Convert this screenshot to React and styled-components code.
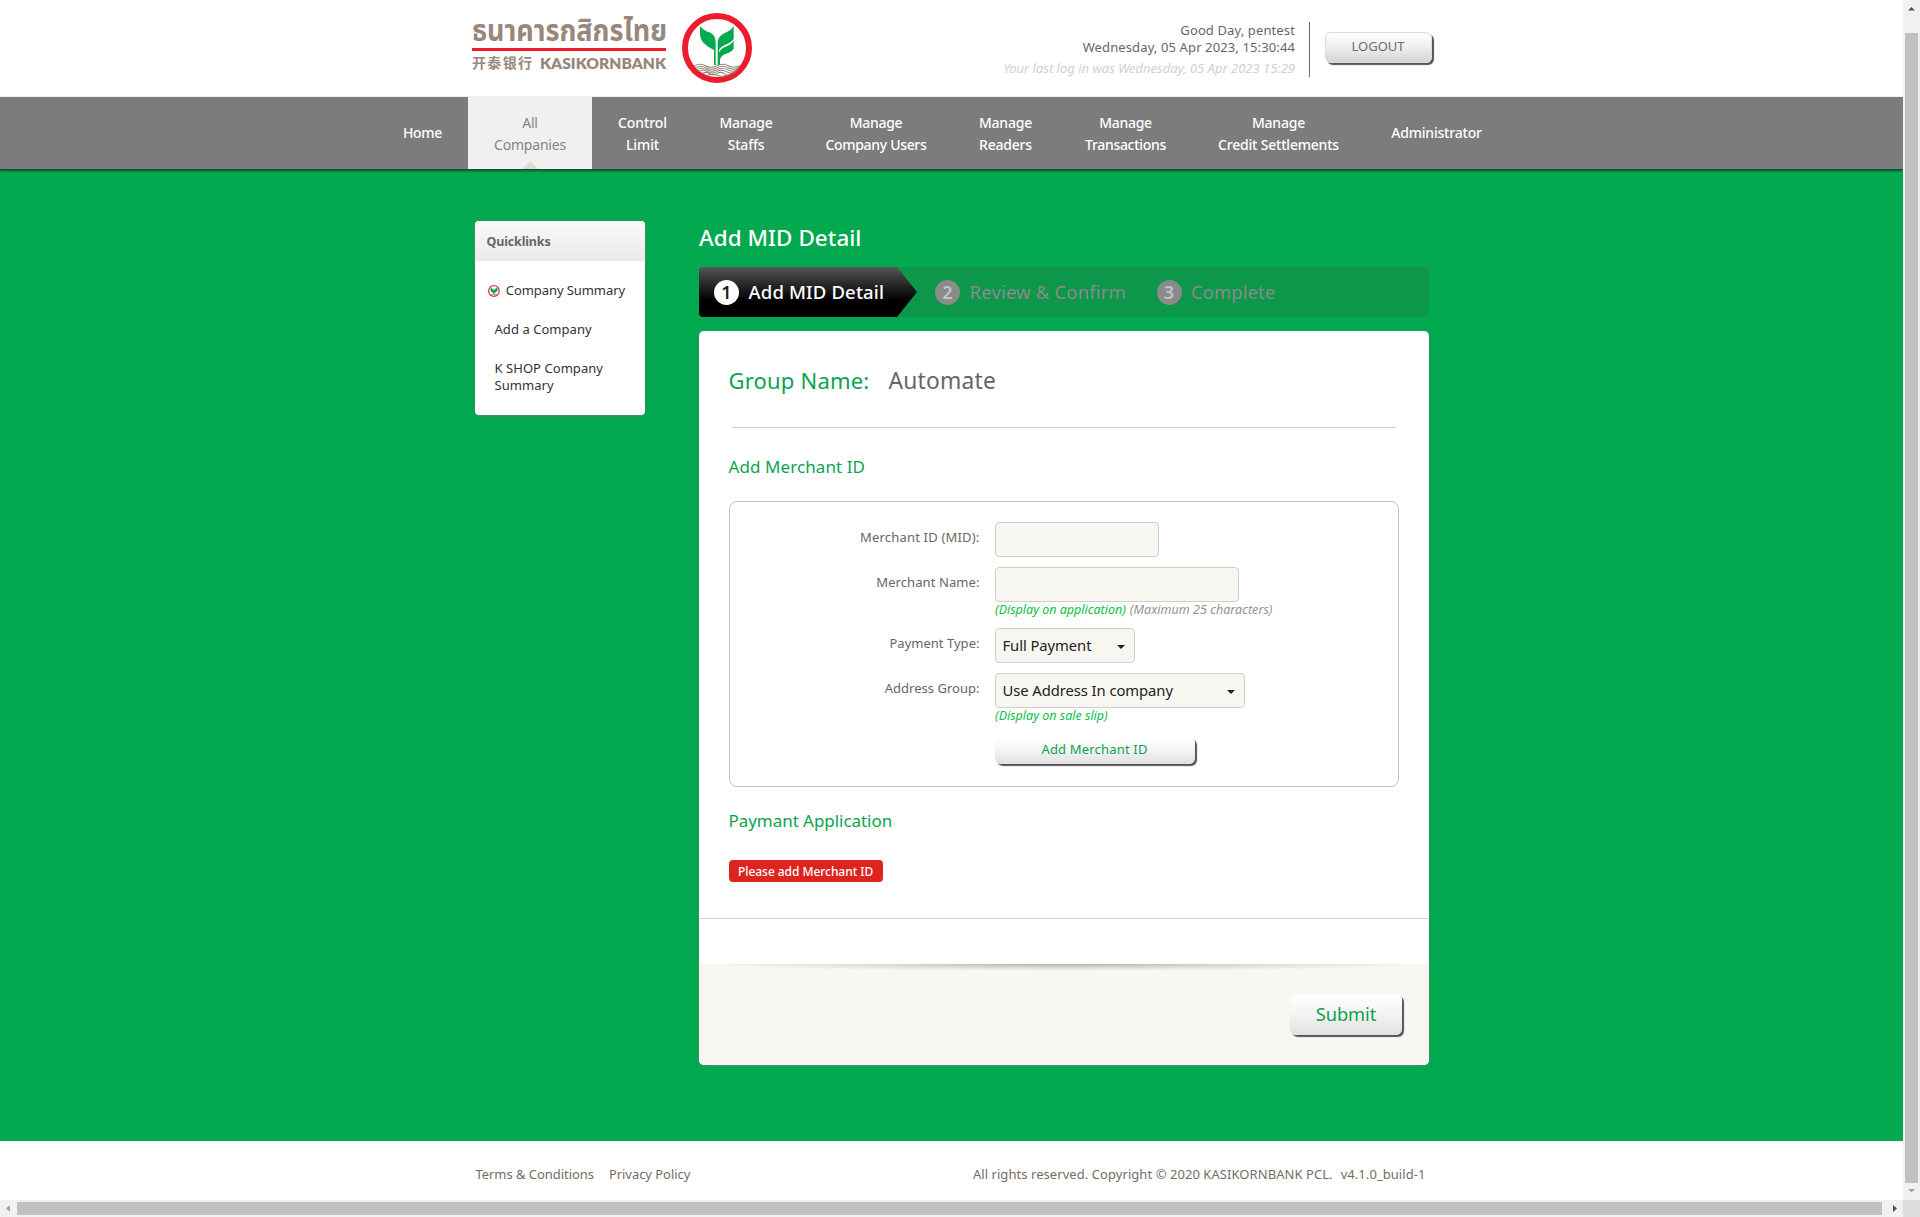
import React from "react";
import styled, { createGlobalStyle, css } from "styled-components";

const GlobalStyle = createGlobalStyle`
  *, *::before, *::after { box-sizing: border-box; }
  body {
    margin: 0;
    overflow: hidden;
    background: #fff;
    color: #666;
    font: 13px/17px "Noto Sans", "Open Sans", "Noto Sans CJK SC", sans-serif;
  }
`;

const Window = styled.div`
  display: grid;
  grid-template: 1200px 17px / 1903px 17px;
  width: 1920px;
  height: 1217px;
  overflow: hidden;
`;

const Page = styled.div`
  display: flex;
  flex-direction: column;
  overflow: hidden;
`;

/* ---------- header ---------- */

const Header = styled.header`
  display: flex;
  flex: none;
  height: 97px;
  padding: 0 470px 0 472px;
  border-bottom: 1px solid #efefef;
`;

const Logo = styled.svg`
  flex: none;
  width: 290px;
  height: 96px;
`;

const Session = styled.div`
  margin: 22px 0 0 auto;
  padding-right: 14px;
  height: 55px;
  border-right: 1px solid #776b66;
  text-align: right;
  letter-spacing: 0.12px;
  white-space: nowrap;
`;

const LastLogin = styled.div`
  margin-top: 4px;
  color: #d0d0d0;
  font-style: italic;
  letter-spacing: 0;
`;

const Button = styled.button`
  flex: none;
  padding: 0;
  border: 0;
  border-radius: 6px;
  background: linear-gradient(#fff, #f2f2f2 55%, #e0e0e0);
  box-shadow: 2px 2px 1px #555;
  color: #0aa34f;
  font: inherit;
`;

const LogoutButton = styled(Button)`
  width: 107px;
  height: 31px;
  margin: 32px 1px 0 15px;
  padding: 0 1px 3px 0;
  border: 1px solid #dcdcdc;
  background: linear-gradient(#fff, #f0f0f0 45%, #d4d4d4);
  color: #776b66;
`;

/* ---------- navigation ---------- */

const Nav = styled.nav`
  position: relative;
  display: flex;
  flex: none;
  height: 72px;
  padding-left: 377px;
  background: #7c7c7c;
  box-shadow: 0 1px 0 #1c4a31, 0 2px 2px rgba(0, 50, 20, 0.7);
`;

const NavItem = styled.a`
  position: relative;
  display: flex;
  align-items: center;
  justify-content: center;
  width: ${(p) => p.$width}px;
  padding-top: ${(p) => (p.$single ? 0 : 1)}px;
  color: #fff;
  font-size: 14px;
  font-weight: 500;
  line-height: 22px;
  letter-spacing: ${(p) => p.$tracking || -0.2}px;
  text-align: center;
  white-space: pre-line;
  ${(p) =>
    p.$active &&
    css`
      background: #f0f0f0;
      color: #858585;
      font-weight: 400;
      &::after {
        content: "";
        position: absolute;
        bottom: 0;
        left: 54px;
        border: 8px solid transparent;
        border-top: 0;
        border-bottom-color: #dfd9d9;
      }
    `}
`;

/* ---------- body ---------- */

const Body = styled.main`
  display: flex;
  flex: none;
  align-items: flex-start;
  gap: 54px;
  height: 972px;
  padding: 52px 0 0 475px;
  background: #02a94f;
`;

const Sidebar = styled.aside`
  width: 170px;
  height: 194px;
  border-radius: 4px;
  overflow: hidden;
  background: #fff;
  box-shadow: 0 1px 3px rgba(120, 130, 120, 0.7);
`;

const SidebarTitle = styled.h3`
  height: 40px;
  margin: 0;
  padding-left: 11.5px;
  background: linear-gradient(#f9f9f9, #eaeaea);
  color: #6b6663;
  font-size: 12.5px;
  line-height: 42px;
  letter-spacing: -0.15px;
`;

const Links = styled.ul`
  display: flex;
  flex-direction: column;
  gap: 22px;
  margin: 0;
  padding: 21px 20px 0 19.5px;
  list-style: none;
  color: #333;
`;

const LinkItem = styled.li`
  display: flex;
  align-items: center;
  gap: 6px;
  margin-left: ${(p) => (p.$current ? -6.5 : 0)}px;
  letter-spacing: ${(p) => (p.$current ? -0.08 : 0.05)}px;
  white-space: ${(p) => (p.$current ? "nowrap" : "normal")};
`;

const Content = styled.section`
  width: 730px;
`;

const PageTitle = styled.h1`
  height: 46px;
  margin: 0;
  padding-top: 1px;
  color: #fff;
  font-size: 22.4px;
  font-weight: 500;
  line-height: 32px;
  letter-spacing: 0.06px;
`;

const Stepper = styled.ol`
  display: flex;
  height: 50px;
  margin: 0 0 14px;
  padding: 0;
  border-radius: 4px;
  background: #0c974a;
  list-style: none;
`;

const Step = styled.li`
  display: flex;
  align-items: center;
  gap: 9.5px;
  height: 50px;
  color: #8b8b8b;
  font-size: 18.5px;
  line-height: 30px;
  letter-spacing: ${(p) => p.$tracking}px;
  white-space: nowrap;
  width: ${(p) => p.$width}px;
  padding-left: ${(p) => p.$inset}px;
  ${(p) =>
    p.$active &&
    css`
      border-radius: 4px 0 0 4px;
      background: linear-gradient(#555, #000 66%);
      clip-path: polygon(0 0, 198px 0, 218px 50%, 198px 100%, 0 100%);
      color: #fff;
      font-weight: 500;
    `}
`;

const StepNumber = styled.span`
  flex: none;
  width: 25px;
  height: 25px;
  border-radius: 50%;
  background: ${(p) => (p.$active ? "#fff" : "#8b8b8b")};
  color: ${(p) => (p.$active ? "#222" : "#c4c4c4")};
  font-size: 18px;
  font-weight: 600;
  line-height: 25px;
  text-align: center;
`;

const Card = styled.div`
  display: flex;
  flex-direction: column;
  height: 734px;
  border-radius: 5px;
  overflow: hidden;
  background: #fff;
  box-shadow: 0 1px 3px rgba(120, 130, 120, 0.7);
`;

const GroupName = styled.h2`
  display: flex;
  align-items: baseline;
  gap: 19px;
  margin: 34px 0 0 29.5px;
  height: 30px;
  color: #0aa34f;
  font-size: 22px;
  font-weight: 400;
  line-height: 30px;
  letter-spacing: 0.2px;
`;

const GroupValue = styled.span`
  color: #666;
  font-size: 22.8px;
`;

const Divider = styled.div`
  flex: none;
  height: 1px;
  margin: ${(p) => p.$margin};
  background: #d0cfca;
`;

const SectionTitle = styled.h3`
  margin: ${(p) => p.$top}px 0 0 29.5px;
  color: #0aa34f;
  font-size: 17px;
  font-weight: 400;
  line-height: 24px;
  letter-spacing: ${(p) => p.$tracking}px;
`;

const Form = styled.div`
  display: grid;
  grid-template: 45px 61px 45px 64px 1fr / 249.5px 1fr;
  column-gap: 15.5px;
  height: 286px;
  margin: 22px 30px 0;
  padding-top: 20px;
  border: 1px solid #c6c6c6;
  border-radius: 8px;
`;

const Label = styled.label`
  letter-spacing: ${(p) => p.$tracking || 0.02}px;
  line-height: 30px;
  text-align: right;
`;

const Input = styled.input`
  display: block;
  width: ${(p) => p.$width}px;
  height: 35px;
  border: 1px solid #d0cfca;
  border-radius: 4px;
  background: #f7f6f1;
`;

const Select = styled.div`
  display: flex;
  align-items: center;
  justify-content: space-between;
  width: ${(p) => p.$width}px;
  height: 35px;
  padding: 0 9px 0 6.5px;
  border: 1px solid #d0cfca;
  border-radius: 4px;
  background: #f7f6f1;
  color: #222;
  font-size: 14.8px;
  letter-spacing: -0.07px;
`;

const Caret = styled.span`
  margin-top: 2px;
  border: 4px solid transparent;
  border-top-color: #222;
  border-bottom: 0;
`;

const Hint = styled.div`
  display: flex;
  gap: 4px;
  color: #929292;
  font-size: 12.5px;
  font-style: italic;
  line-height: 15px;
  letter-spacing: 0.04px;
  white-space: nowrap;
`;

const HintGreen = styled.span`
  color: #0dc143;
  letter-spacing: 0;
`;

const AddButton = styled(Button)`
  grid-column: 2;
  width: 200px;
  height: 27px;
  padding: 0 1px 2px 0;
  letter-spacing: 0.18px;
`;

const Badge = styled.div`
  align-self: flex-start;
  height: 22px;
  margin: 27px 0 36px 30px;
  padding: 0 9.5px 0 9px;
  border-radius: 4px;
  background: #dd241f;
  color: #fff;
  font-size: 12px;
  font-weight: 500;
  line-height: 23px;
  letter-spacing: -0.05px;
`;

const CardFooter = styled.div`
  display: flex;
  justify-content: flex-end;
  height: 101px;
  margin-top: auto;
  padding: 30px 27px 0;
  background: radial-gradient(50% 7px at 50% 0, rgba(110, 110, 105, 0.5), rgba(160, 160, 155, 0.25) 60%, transparent) #f8f7f4;
`;

const SubmitButton = styled(Button)`
  width: 112px;
  height: 41px;
  padding: 0;
  font-size: 18.2px;
`;

/* ---------- footer ---------- */

const Footer = styled.footer`
  display: flex;
  gap: 15px;
  flex: none;
  height: 59px;
  padding: 25px 477.5px 0 475.5px;
  color: #776b66;
  letter-spacing: -0.05px;
`;

const Legal = styled.div`
  display: flex;
  gap: 8px;
  margin-left: auto;
  letter-spacing: 0.06px;
`;

/* ---------- scrollbars ---------- */

const Scrollbar = styled.div`
  display: flex;
  flex-direction: ${(p) => (p.$vertical ? "column" : "row")};
  align-items: center;
  background: #f1f1f1;
`;

const Arrow = styled.svg`
  flex: none;
  width: 17px;
  height: 17px;
  fill: ${(p) => (p.$enabled ? "#505050" : "#a3a3a3")};
`;

const Thumb = styled.div`
  flex: none;
  width: ${(p) => p.$width}px;
  height: ${(p) => p.$height}px;
  margin: ${(p) => p.$margin};
  background: #c1c1c1;
`;

const Corner = styled.div`
  background: #dcdcdc;
`;

const Emblem = () => (
  <g>
    <circle cx="771" cy="144" r="96" fill="#fff" stroke="#ed1b2e" strokeWidth="18" />
    <g fill="none" stroke="#98877c" strokeWidth="3.2">
      <path d="M703 197q17-9 34 0t34 0t34 0t34 0" />
      <path d="M706 203q16-9 32 0t33 0t33 0t33 0" />
      <path d="M709 209q16-9 31 0t31 0t31 0t31 0" />
      <path d="M715 215q14-9 28 0t28 0t28 0t28 0" />
      <path d="M727 221q11-8 22 0t22 0t22 0t22 0" />
      <path d="M743 226q14-6 28 0t28 0" />
    </g>
    <g fill="#02a94f">
      <path d="M720 77q8 13 28 20q18 8 19 27V195H762V150Q744 142 731 129Q720 118 720 100Z" />
      <path d="M821 77q-6 13-25 21q-22 9-23 30v67h4v-43q2-9 16-16q22-9 28-19Z" />
      <path d="M821 122v24q-6 10-25 16q-16 6-16 20v13h-4v-32q2-14 17-21q20-8 28-20Z" />
    </g>
  </g>
);

const BankLogo = () => (
  <Logo viewBox="0 0 290 96">
    <g fill="#98877c">
      <text
        x="0"
        y="0"
        transform="translate(0 40.5) scale(1 1.2)"
        fontSize="25.4"
        fontWeight="700"
        textLength="195"
        lengthAdjust="spacingAndGlyphs"
        fontFamily="Noto Sans Thai, Noto Sans, sans-serif"
      >
        ธนาคารกสิกรไทย
      </text>
      <text x="0" y="68" fontSize="14" fontWeight="600" textLength="60" fontFamily="Noto Sans CJK SC, sans-serif">
        开泰银行
      </text>
      <text x="68" y="68.5" fontSize="15.6" fontWeight="800" textLength="126" fontFamily="Lato, sans-serif">
        KASIKORNBANK
      </text>
    </g>
    <rect y="48" width="194" height="3" fill="#ed1b2e" />
    <g transform="scale(0.33333) translate(-36 0)">
      <Emblem />
    </g>
  </Logo>
);

const MiniEmblem = () => (
  <svg width="12" height="12" viewBox="666 39 210 210" preserveAspectRatio="none">
    <circle cx="771" cy="144" r="94" fill="#fff" stroke="#e8304a" strokeWidth="22" />
    <path fill="#02a94f" d="M712 78l60 50 62-50v66l-52 36v24h-22v-24l-48-30Z" />
    <path stroke="#98a89c" strokeWidth="16" d="M725 206h92" />
  </svg>
);

const NAV = [
  { text: "Home", width: 91, tracking: -0.3, single: true },
  { text: "All\nCompanies", width: 124, active: true },
  { text: "Control\nLimit", width: 101, tracking: -0.1 },
  { text: "Manage\nStaffs", width: 106 },
  { text: "Manage\nCompany Users", width: 154, tracking: -0.32 },
  { text: "Manage\nReaders", width: 105 },
  { text: "Manage\nTransactions", width: 135, tracking: -0.3 },
  { text: "Manage\nCredit Settlements", width: 171 },
  { text: "Administrator", width: 145, single: true },
];

const STEPS = [
  { text: "Add MID Detail", width: 218, inset: 15, tracking: 0.15, active: true },
  { text: "Review & Confirm", width: 222, inset: 18, tracking: 0.16 },
  { text: "Complete", width: 200, inset: 17.5, tracking: 0.05 },
];

export default function App() {
  return (
    <>
      <GlobalStyle />
      <Window>
        <Page>
          <Header>
            <BankLogo />
            <Session>
              <div>Good Day, pentest</div>
              <div>Wednesday, 05 Apr 2023, 15:30:44</div>
              <LastLogin>Your last log in was Wednesday, 05 Apr 2023 15:29</LastLogin>
            </Session>
            <LogoutButton>LOGOUT</LogoutButton>
          </Header>
          <Nav>
            {NAV.map((item) => (
              <NavItem
                key={item.text}
                $width={item.width}
                $active={item.active}
                $single={item.single}
                $tracking={item.tracking}
              >
                {item.text}
              </NavItem>
            ))}
          </Nav>
          <Body>
            <Sidebar>
              <SidebarTitle>Quicklinks</SidebarTitle>
              <Links>
                <LinkItem $current>
                  <MiniEmblem />
                  Company Summary
                </LinkItem>
                <LinkItem>Add a Company</LinkItem>
                <LinkItem>K SHOP Company Summary</LinkItem>
              </Links>
            </Sidebar>
            <Content>
              <PageTitle>Add MID Detail</PageTitle>
              <Stepper>
                {STEPS.map((step, i) => (
                  <Step
                    key={step.text}
                    $width={step.width}
                    $inset={step.inset}
                    $tracking={step.tracking}
                    $active={step.active}
                  >
                    <StepNumber $active={step.active}>{i + 1}</StepNumber>
                    {step.text}
                  </Step>
                ))}
              </Stepper>
              <Card>
                <GroupName>
                  Group Name: <GroupValue>Automate</GroupValue>
                </GroupName>
                <Divider $margin="32px 33px 0" />
                <SectionTitle $top={27} $tracking={0.08}>
                  Add Merchant ID
                </SectionTitle>
                <Form>
                  <Label $tracking={0.18}>Merchant ID (MID):</Label>
                  <Input $width={164} />
                  <Label $tracking={0.08}>Merchant Name:</Label>
                  <div>
                    <Input $width={244} />
                    <Hint>
                      <HintGreen>(Display on application)</HintGreen>
                      <span>(Maximum 25 characters)</span>
                    </Hint>
                  </div>
                  <Label>Payment Type:</Label>
                  <Select $width={140}>
                    Full Payment
                    <Caret />
                  </Select>
                  <Label>Address Group:</Label>
                  <div>
                    <Select $width={250}>
                      Use Address In company
                      <Caret />
                    </Select>
                    <Hint>
                      <HintGreen>(Display on sale slip)</HintGreen>
                    </Hint>
                  </div>
                  <AddButton>Add Merchant ID</AddButton>
                </Form>
                <SectionTitle $top={22} $tracking={-0.05}>
                  Paymant Application
                </SectionTitle>
                <Badge>Please add Merchant ID</Badge>
                <Divider $margin="0" />
                <CardFooter>
                  <SubmitButton>Submit</SubmitButton>
                </CardFooter>
              </Card>
            </Content>
          </Body>
          <Footer>
            <span>Terms &amp; Conditions</span>
            <span>Privacy Policy</span>
            <Legal>
              <span>All rights reserved. Copyright © 2020 KASIKORNBANK PCL.</span>
              <span>v4.1.0_build-1</span>
            </Legal>
          </Footer>
        </Page>
        <Scrollbar $vertical>
          <Arrow $enabled viewBox="0 0 17 17">
            <path d="M5 10.5h7L8.5 7Z" />
          </Arrow>
          <Thumb $width={13} $height={1150} $margin="16px 0 0" />
          <Arrow viewBox="0 0 17 17">
            <path d="M5 6h7L8.5 9.5Z" />
          </Arrow>
        </Scrollbar>
        <Scrollbar>
          <Arrow viewBox="0 0 17 17">
            <path d="M10 5v7L6 8.5Z" />
          </Arrow>
          <Thumb $width={1865} $height={13} $margin="0 4px 0 0" />
          <Arrow $enabled viewBox="0 0 17 17">
            <path d="M7 5v7L11 8.5Z" />
          </Arrow>
        </Scrollbar>
        <Corner />
      </Window>
    </>
  );
}
